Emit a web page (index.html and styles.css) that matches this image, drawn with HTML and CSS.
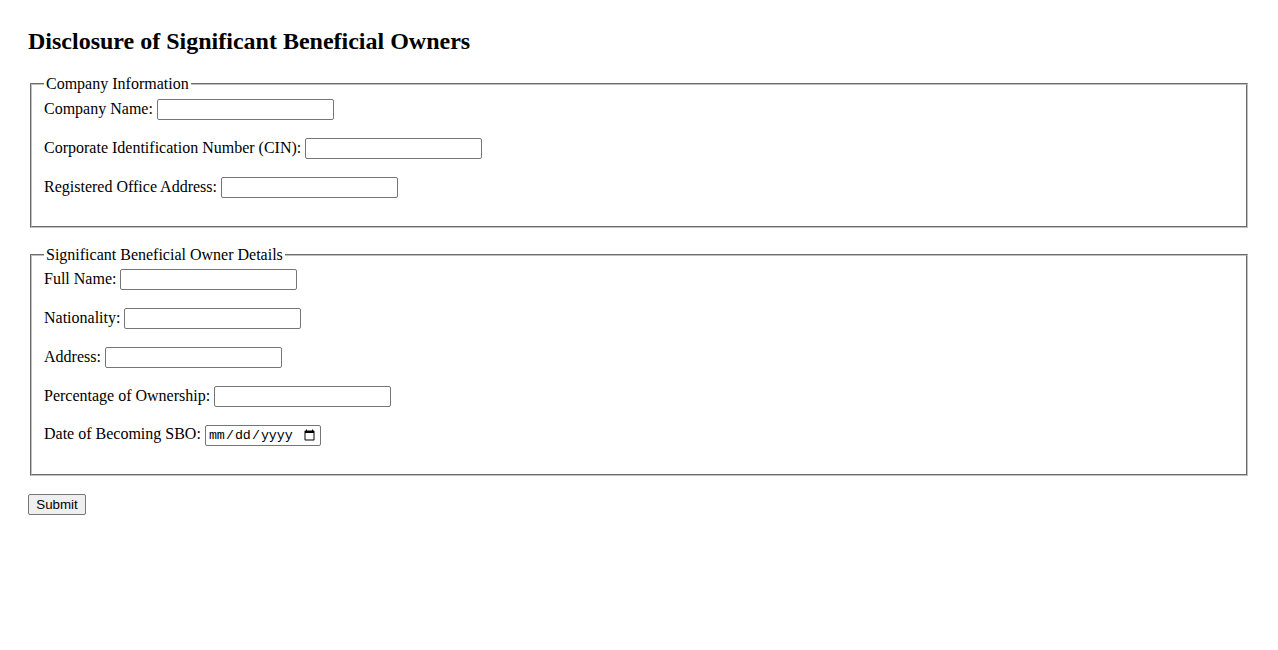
FILE: index.html
```html
<!DOCTYPE html>
<html>
<head>
<meta charset="utf-8">
<title>Disclosure of Significant Beneficial Owners</title>
<link rel="stylesheet" href="styles.css">
</head>
<body class="page">
<h2 class="title">Disclosure of Significant Beneficial Owners</h2>
<form class="form">
<fieldset class="group">
<legend class="legend">Company Information</legend>
<label class="label" for="cname">Company Name:</label>
<input class="field" type="text" id="cname"><br><br>
<label class="label" for="cin">Corporate Identification Number (CIN):</label>
<input class="field" type="text" id="cin"><br><br>
<label class="label" for="addr">Registered Office Address:</label>
<input class="field" type="text" id="addr"><br><br>
</fieldset>
<br>
<fieldset class="group">
<legend class="legend">Significant Beneficial Owner Details</legend>
<label class="label" for="fname">Full Name:</label>
<input class="field" type="text" id="fname"><br><br>
<label class="label" for="nat">Nationality:</label>
<input class="field" type="text" id="nat"><br><br>
<label class="label" for="oaddr">Address:</label>
<input class="field" type="text" id="oaddr"><br><br>
<label class="label" for="pct">Percentage of Ownership:</label>
<input class="field" type="text" id="pct"><br><br>
<label class="label" for="date">Date of Becoming SBO:</label>
<input class="field date" type="date" id="date"><br><br>
</fieldset>
<br>
<button class="submit" type="submit">Submit</button>
</form>
</body>
</html>
```
FILE: styles.css
```css
.page {
  margin: 28px;
  font-family: "Liberation Serif", "Times New Roman", serif;
  font-size: 16px;
  color: #000;
  background: #fff;
}
.title {
  font-size: 24px;
  font-weight: bold;
  margin: 0 0 20px 0;
}
.form {
  margin: 0;
}
.group {
  margin: 0 2px;
  padding: 0.35em 0.75em 0.625em;
  border: 2px groove #c0c0c0;
}
.legend {
  padding: 0 2px;
}
.label {
  font-size: 16px;
}
.field {
  box-sizing: border-box;
  width: 177px;
  height: 21px;
  border: 1px solid #767676;
  border-radius: 2px;
  padding: 1px 2px;
  font-family: "Liberation Sans", Arial, sans-serif;
  font-size: 13.333px;
  vertical-align: baseline;
}
.date {
  width: 116px;
  font-family: "Liberation Mono", "Courier New", monospace;
  font-size: 13.333px;
  padding: 1px 2px;
}
.submit {
  box-sizing: border-box;
  min-width: 58px;
  font-family: "Liberation Sans", Arial, sans-serif;
  font-size: 13.333px;
  padding: 1px 6px;
  height: 21px;
  border: 1px solid #767676;
  border-radius: 2px;
  background: #efefef;
  color: #000;
}
```
